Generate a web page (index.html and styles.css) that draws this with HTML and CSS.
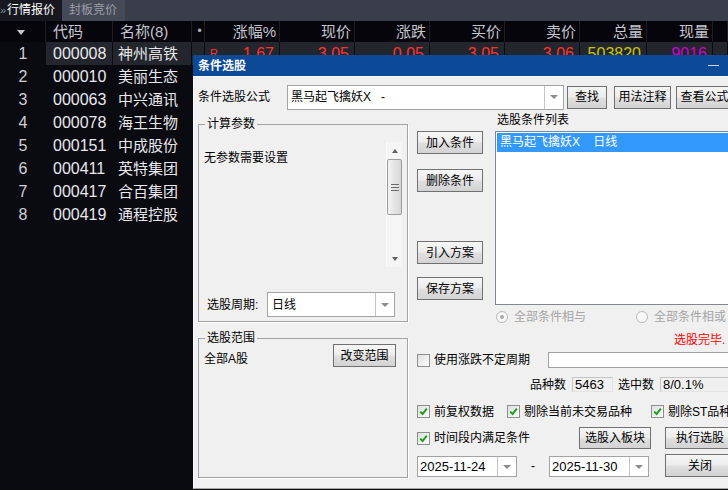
FILE: index.html
```html
<!DOCTYPE html>
<html lang="zh-CN">
<head>
    <meta charset="UTF-8">
    <title>行情报价 - 条件选股</title>
    <link rel="stylesheet" href="styles.css">
</head>
<body>
    <div class="tabs">
        <div class="tab active"><span class="more">»</span>行情报价</div>
        <div class="tab">封板竞价</div>
    </div>

    <div class="quotes">
        <div class="qrow qhead">
            <div class="c-no"><span class="sort-arrow"></span></div>
            <div class="c-code">代码</div>
            <div class="c-name">名称(8)</div>
            <div class="c-dot">•</div>
            <div class="c-num">涨幅%</div>
            <div class="c-num">现价</div>
            <div class="c-num">涨跌</div>
            <div class="c-num">买价</div>
            <div class="c-num">卖价</div>
            <div class="c-num">总量</div>
            <div class="c-num">现量</div>
            <div></div>
        </div>
        <div class="qrow current">
            <div class="c-no">1</div>
            <div class="c-code">000008</div>
            <div class="c-name">神州高铁</div>
            <div class="c-dot"></div>
            <div class="c-num val up"><span class="flag">R</span>1.67</div>
            <div class="c-num val up">3.05</div>
            <div class="c-num val up">0.05</div>
            <div class="c-num val up">3.05</div>
            <div class="c-num val up">3.06</div>
            <div class="c-num val vol">503820</div>
            <div class="c-num val cur-vol">9016</div>
            <div></div>
        </div>
        <div class="qrow"><div class="c-no">2</div><div class="c-code">000010</div><div class="c-name">美丽生态</div></div>
        <div class="qrow"><div class="c-no">3</div><div class="c-code">000063</div><div class="c-name">中兴通讯</div></div>
        <div class="qrow"><div class="c-no">4</div><div class="c-code">000078</div><div class="c-name">海王生物</div></div>
        <div class="qrow"><div class="c-no">5</div><div class="c-code">000151</div><div class="c-name">中成股份</div></div>
        <div class="qrow"><div class="c-no">6</div><div class="c-code">000411</div><div class="c-name">英特集团</div></div>
        <div class="qrow"><div class="c-no">7</div><div class="c-code">000417</div><div class="c-name">合百集团</div></div>
        <div class="qrow"><div class="c-no">8</div><div class="c-code">000419</div><div class="c-name">通程控股</div></div>
    </div>

    <!-- 条件选股窗口 -->
    <div class="dialog">
        <div class="dlg-title">
            <span class="dlg-caption">条件选股</span>
            <span class="win-btn min"><i></i></span>
            <span class="win-btn close"><svg viewBox="0 0 10 10"><path d="M1 1 9 9M9 1 1 9"/></svg></span>
        </div>
        <div class="dlg-body">
            <div class="formula-row">
                <label class="formula-label">条件选股公式</label>
                <div class="combo formula-combo">
                    <span class="combo-val">黑马起飞擒妖X&nbsp;&nbsp;&nbsp;-</span>
                    <span class="combo-drop"><i></i></span>
                </div>
                <button class="btn btn-find">查找</button>
                <button class="btn btn-note">用法注释</button>
                <button class="btn btn-note">查看公式</button>
            </div>

            <div class="main">
                <div class="left-col">
                    <fieldset class="group params-group">
                        <legend>计算参数</legend>
                        <div class="params-panel">
                            <div class="params-text">无参数需要设置</div>
                            <div class="vscroll">
                                <span class="sb-arrow"><i class="tri-up"></i></span>
                                <span class="sb-thumb"><i></i><i></i><i></i></span>
                                <span class="sb-track"></span>
                                <span class="sb-arrow"><i class="tri-down"></i></span>
                            </div>
                        </div>
                        <div class="period-row">
                            <label>选股周期:</label>
                            <div class="combo period-combo">
                                <span class="combo-val">日线</span>
                                <span class="combo-drop"><i></i></span>
                            </div>
                        </div>
                    </fieldset>

                    <fieldset class="group range-group">
                        <legend>选股范围</legend>
                        <div class="range-row">
                            <span class="range-text">全部A股</span>
                            <button class="btn btn-range">改变范围</button>
                        </div>
                    </fieldset>
                </div>

                <div class="right-col">
                    <div class="cond-area">
                        <div class="cond-buttons">
                            <button class="btn btn-cond">加入条件</button>
                            <button class="btn btn-cond del">删除条件</button>
                            <button class="btn btn-cond load">引入方案</button>
                            <button class="btn btn-cond save">保存方案</button>
                        </div>
                        <div class="cond-list-col">
                            <div class="list-title">选股条件列表</div>
                            <div class="listbox">
                                <div class="list-item selected">黑马起飞擒妖X&nbsp;&nbsp;&nbsp;&nbsp;日线</div>
                            </div>
                        </div>
                    </div>

                    <div class="radio-row">
                        <span class="radio-item"><span class="radio checked"></span>全部条件相与</span>
                        <span class="radio-item"><span class="radio"></span>全部条件相或</span>
                    </div>

                    <div class="status">选股完毕.</div>

                    <div class="opt-row var-row">
                        <span class="check-label"><span class="check"></span>使用涨跌不定周期</span>
                        <span class="text-box"></span>
                    </div>

                    <div class="opt-row count-row">
                        <span>品种数</span>
                        <span class="count-box">5463</span>
                        <span>选中数</span>
                        <span class="count-box wide">8/0.1%</span>
                    </div>

                    <div class="opt-row checks-row">
                        <span class="check-label w-fq"><span class="check"><svg viewBox="0 0 11 11"><path d="M2.2 5.6 4.6 8 8.8 2.6"/></svg></span>前复权数据</span>
                        <span class="check-label w-wjy"><span class="check"><svg viewBox="0 0 11 11"><path d="M2.2 5.6 4.6 8 8.8 2.6"/></svg></span>剔除当前未交易品种</span>
                        <span class="check-label"><span class="check"><svg viewBox="0 0 11 11"><path d="M2.2 5.6 4.6 8 8.8 2.6"/></svg></span>剔除ST品种</span>
                    </div>

                    <div class="opt-row period-cond-row">
                        <span class="check-label w-sjd"><span class="check"><svg viewBox="0 0 11 11"><path d="M2.2 5.6 4.6 8 8.8 2.6"/></svg></span>时间段内满足条件</span>
                        <button class="btn btn-block">选股入板块</button>
                        <button class="btn btn-run">执行选股</button>
                    </div>

                    <div class="opt-row date-row">
                        <div class="combo date-combo">
                            <span class="combo-val">2025-11-24</span>
                            <span class="combo-drop"><i></i></span>
                        </div>
                        <span class="date-dash">-</span>
                        <div class="combo date-combo">
                            <span class="combo-val">2025-11-30</span>
                            <span class="combo-drop"><i></i></span>
                        </div>
                        <button class="btn btn-close">关闭</button>
                    </div>
                </div>
            </div>
        </div>
    </div>
</body>
</html>
```

FILE: styles.css
```css
*, *::before, *::after {
    box-sizing: border-box;
}
html, body {
    margin: 0;
    padding: 0;
    height: 100%;
}
body {
    position: relative;
    overflow: hidden;
    background-color: #0a0a11;
    font-family: "Liberation Sans", "Noto Sans CJK SC", sans-serif;
}

/* 顶部标签 */
.tabs {
    display: flex;
    height: 21px;
    background-color: #3a3d4c;
    font-size: 12px;
    line-height: 21px;
}
.tab {
    padding: 0 8px 0 7px;
    color: #9c9ea8;
    background-color: #464957;
}
.tab.active {
    padding: 0 7px 0 0;
    background-color: #16171f;
    color: #fff;
}
.tab .more {
    display: inline-block;
    width: 7px;
    font-size: 11px;
    color: #8c8e98;
}

/* 行情列表 */
.quotes {
    font-size: 15px;
    color: #e8e8ec;
}
.qrow {
    display: grid;
    grid-template-columns: 46px 67px 79px 13px repeat(5, 75px) 67px 66px 1fr;
    height: 23px;
    line-height: 23px;
}
.qrow > div {
    overflow: hidden;
    white-space: nowrap;
}
.qhead {
    height: 21px;
    line-height: 21px;
    background-color: #05050b;
    color: #c6c6ce;
}
.qhead > div {
    border-right: 1px solid #1b1c24;
}
.sort-arrow {
    display: inline-block;
    border-left: 4px solid transparent;
    border-right: 4px solid transparent;
    border-top: 5px solid #c4c4cc;
    vertical-align: middle;
    margin-left: -3px;
}
.c-no {
    text-align: center;
    font-size: 16px;
    color: #cfd0d8;
}
.c-code {
    padding-left: 7px;
    font-size: 16px;
}
.qhead .c-code {
    font-size: 15px;
}
.c-name {
    padding-left: 5px;
}
.qhead .c-name {
    padding-left: 7px;
}
.c-dot {
    text-align: center;
    padding-left: 3px;
    font-size: 12px;
    color: #b0b0b8;
}
.c-num {
    text-align: right;
    padding-right: 3px;
}
.qrow.current > div:not(.c-no) {
    background-color: #24262d;
    border-right: 1px solid #0b0b10;
}
.qrow.current .c-code {
    background-color: #2d2f38;
}
.val {
    display: flex;
    justify-content: flex-end;
    padding-right: 5px;
    font-size: 16px;
}
.up { color: #ff3232; }
.vol { color: #c8c800; }
.cur-vol { color: #d000d0; }
.flag {
    margin-right: auto;
    padding-left: 5px;
    font-size: 11px;
    color: #ff3232;
}

/* 条件选股窗口 */
.dialog {
    position: absolute;
    left: 193px;
    top: 55px;
    width: 560px;
    height: 434px;
    display: flex;
    flex-direction: column;
    font-size: 12px;
    line-height: 16px;
    color: #000;
}
.dlg-title {
    display: flex;
    align-items: center;
    height: 21px;
    background-color: #0c4a97;
    color: #fff;
}
.dlg-caption {
    flex: 1;
    padding-left: 5px;
    font-weight: bold;
}
.win-btn {
    width: 28px;
    height: 21px;
    display: flex;
    align-items: center;
    justify-content: center;
}
.win-btn.min i {
    width: 11px;
    border-top: 1px solid #c9d6ea;
}
.win-btn.close {
    width: 26px;
}
.win-btn.close svg {
    width: 9px;
    height: 9px;
}
.win-btn.close path {
    stroke: #dfe7f3;
    stroke-width: 1.2;
}
.dlg-body {
    flex: 1;
    padding: 7px 0 0 4px;
    background-color: #f0f0f0;
    border-top: 1px solid #f9f9f9;
    border-left: 1px solid #fafafa;
    border-bottom: 1px solid #a6a6a6;
}

.btn {
    height: 23px;
    padding: 0;
    border: 1px solid #707070;
    background: linear-gradient(#f6f6f6, #ededed 45%, #dfdfdf 55%, #d3d3d3);
    font: inherit;
    color: #000;
    display: flex;
    align-items: center;
    justify-content: center;
    white-space: nowrap;
}

.combo {
    display: flex;
    height: 25px;
    border: 1px solid #a3a3a3;
    background-color: #fff;
}
.combo-val {
    flex: 1;
    display: flex;
    align-items: center;
    padding-left: 3px;
    white-space: nowrap;
    overflow: hidden;
}
.combo-drop {
    width: 19px;
    border-left: 1px solid #c6c6c6;
    display: flex;
    align-items: center;
    justify-content: center;
}
.combo-drop i {
    border-left: 4px solid transparent;
    border-right: 4px solid transparent;
    border-top: 4px solid #8c8c8c;
}

.formula-row {
    display: flex;
    align-items: center;
    height: 26px;
}
.formula-label {
    width: 89px;
}
.formula-combo {
    width: 277px;
}
.btn-find {
    width: 40px;
    margin-left: 3px;
}
.btn-note {
    width: 57px;
    margin-left: 7px;
}
.btn-note + .btn-note {
    margin-left: 5px;
}

.main {
    display: flex;
    margin-top: 2px;
}
.left-col {
    width: 210px;
    flex: none;
    margin-top: 6px;
}
.group {
    margin: 0;
    padding: 11px 4px 4px;
    border: 1px solid #a3a3a3;
    box-shadow: 1px 1px 0 #fff;
    min-width: 0;
}
.group legend {
    margin-left: 2px;
    padding: 0 2px;
    line-height: 13px;
}
.params-panel {
    display: flex;
    height: 125px;
    padding-right: 1px;
}
.params-text {
    flex: 1;
    padding: 8px 0 0 1px;
}
.vscroll {
    width: 16px;
    display: flex;
    flex-direction: column;
    background-color: #f5f5f5;
    border-left: 1px solid #fbfbfb;
}
.sb-arrow {
    height: 17px;
    display: flex;
    align-items: center;
    justify-content: center;
}
.tri-up {
    border-left: 3px solid transparent;
    border-right: 3px solid transparent;
    border-bottom: 4px solid #606060;
}
.tri-down {
    border-left: 3px solid transparent;
    border-right: 3px solid transparent;
    border-top: 4px solid #606060;
}
.sb-thumb {
    height: 56px;
    border: 1px solid #9c9c9c;
    border-radius: 2px;
    background: linear-gradient(to right, #f2f2f2, #e2e2e2 60%, #d6d6d6);
    display: flex;
    flex-direction: column;
    align-items: center;
    justify-content: center;
    gap: 2px;
}
.sb-thumb i {
    width: 8px;
    height: 1px;
    background-color: #6e6e6e;
}
.sb-track {
    flex: 1;
}
.period-row {
    display: flex;
    align-items: center;
    height: 25px;
    margin-top: 25px;
    padding-left: 4px;
}
.period-row label {
    width: 60px;
}
.period-combo {
    width: 128px;
}
.period-combo .combo-val {
    padding-left: 4px;
}

.range-group {
    margin-top: 10px;
    height: 146px;
    padding-top: 0;
}
.range-row {
    display: flex;
    justify-content: space-between;
    align-items: flex-start;
    padding-left: 1px;
}
.range-text {
    margin-top: 6px;
}
.btn-range {
    width: 63px;
    margin: -1px 7px 0 0;
}

.right-col {
    width: 340px;
    flex: none;
    margin-left: 9px;
    display: flex;
    flex-direction: column;
}
.cond-area {
    display: flex;
}
.cond-buttons {
    width: 66px;
    padding-top: 19px;
    display: flex;
    flex-direction: column;
}
.btn-cond.del { margin-top: 15px; }
.btn-cond.load { margin-top: 49px; }
.btn-cond.save { margin-top: 13px; }
.cond-list-col {
    flex: 1;
    margin-left: 12px;
}
.list-title {
    height: 19px;
    padding-left: 2px;
}
.listbox {
    height: 174px;
    border: 1px solid #828790;
    background-color: #fff;
    padding: 1px;
}
.list-item {
    height: 19px;
    line-height: 19px;
    padding-left: 3px;
    white-space: nowrap;
}
.list-item.selected {
    background-color: #3399ff;
    color: #fff;
}

.radio-row {
    display: flex;
    height: 14px;
    margin-top: 5px;
    padding-left: 79px;
    color: #a5a5a5;
}
.radio-item {
    flex: none;
    display: flex;
    align-items: center;
    width: 140px;
    white-space: nowrap;
}
.radio {
    width: 12px;
    height: 12px;
    margin-right: 6px;
    border: 1px solid #bababa;
    border-radius: 50%;
    background-color: #f7f7f7;
    display: flex;
    align-items: center;
    justify-content: center;
}
.radio.checked::after {
    content: "";
    width: 4px;
    height: 4px;
    border-radius: 50%;
    background-color: #a8a8a8;
}

.status {
    margin-top: 9px;
    padding-left: 257px;
    line-height: 15px;
    color: #ff0000;
}

.opt-row {
    display: flex;
    align-items: center;
    white-space: nowrap;
}
.check-label {
    flex: none;
    display: flex;
    align-items: center;
}
.check {
    width: 13px;
    height: 13px;
    margin-right: 4px;
    border: 1px solid #8e8f8f;
    background: linear-gradient(135deg, #dedede, #fdfdfd);
    display: flex;
    align-items: center;
    justify-content: center;
}
.check svg {
    width: 11px;
    height: 11px;
}
.check path {
    fill: none;
    stroke: #1e9e1e;
    stroke-width: 2;
}
.var-row {
    height: 16px;
    margin-top: 4px;
}
.var-row .check-label {
    width: 131px;
}
.text-box {
    width: 200px;
    height: 16px;
    border: 1px solid #a0a0a0;
    background-color: #fff;
}
.count-row {
    height: 15px;
    margin-top: 9px;
    padding-left: 113px;
}
.count-box {
    width: 41px;
    height: 15px;
    margin: 0 5px 0 6px;
    padding-left: 2px;
    border: 1px solid #c4c4c4;
    border-right-color: #e4e4e4;
    border-bottom-color: #e4e4e4;
    background-color: #f0f0f0;
    font-size: 13px;
    line-height: 13px;
}
.count-box.wide {
    width: 90px;
    margin-right: 0;
}
.checks-row {
    height: 13px;
    margin-top: 13px;
}
.w-fq { width: 90px; }
.w-wjy { width: 144px; }
.period-cond-row {
    height: 22px;
    margin-top: 9px;
}
.w-sjd { width: 162px; }
.btn-block {
    width: 72px;
    height: 22px;
}
.btn-run {
    width: 70px;
    height: 22px;
    margin-left: 14px;
}
.date-row {
    height: 23px;
    margin-top: 5px;
    align-items: flex-end;
}
.date-combo {
    width: 100px;
    height: 21px;
    font-size: 13px;
}
.date-combo .combo-val {
    padding-left: 2px;
}
.date-dash {
    width: 32px;
    text-align: center;
    align-self: center;
}
.btn-close {
    width: 70px;
    margin-left: 16px;
}
```
